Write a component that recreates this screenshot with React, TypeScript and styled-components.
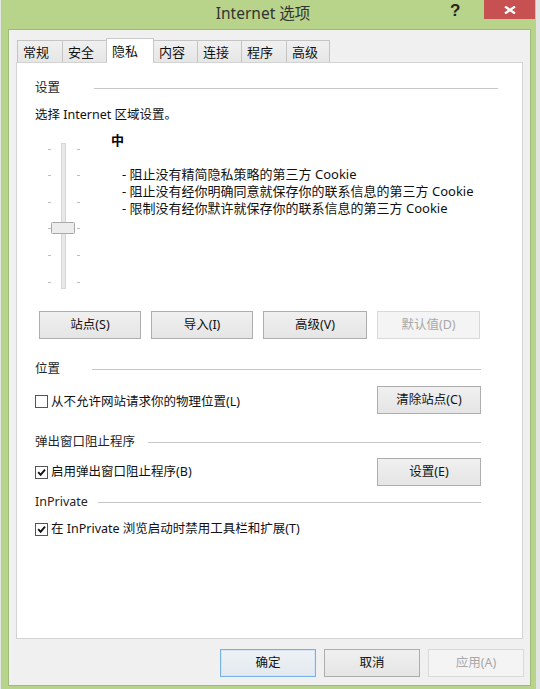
import React from "react";
import styled, { createGlobalStyle } from "styled-components";

const GlobalStyle = createGlobalStyle`
  html, body {
    margin: 0;
    padding: 0;
  }
  body {
    width: 540px;
    height: 689px;
    overflow: hidden;
    background: #e1e6e4;
    font-family: "Noto Sans", "Noto Sans CJK SC", sans-serif;
    font-size: 12.5px;
    color: #111111;
  }
`;

const Window = styled.div`
  box-sizing: border-box;
  width: 535px;
  height: 689px;
  margin-left: 1px;
  padding: 0 4px 3px 7px;
  background: #b8d38a;
  display: flex;
  flex-direction: column;
`;

const TitleBar = styled.div`
  height: 29px;
  display: flex;
  align-items: flex-start;
  margin-right: -4px;
`;

const Title = styled.div`
  flex: 1;
  padding: 3px 0 0 68px;
  text-align: center;
  font-size: 15.5px;
  line-height: 20px;
  color: #333333;
`;

const HelpButton = styled.div`
  width: 12px;
  margin: 1px 22px 0 0;
  font-family: "Liberation Sans", Arial, sans-serif;
  font-weight: 700;
  font-size: 17px;
  line-height: 20px;
  color: #262626;
`;

const CloseButton = styled.div`
  width: 51px;
  height: 19px;
  margin-right: 1px;
  background: #c75050;
  display: flex;
  align-items: center;
  justify-content: center;
`;

const Client = styled.div`
  box-sizing: border-box;
  width: 523px;
  height: 657px;
  border: 1px solid #9fb97c;
  background: #f0f0f0;
  padding-top: 8px;
  display: flex;
  flex-direction: column;
`;

const TabStrip = styled.div`
  display: flex;
  align-items: flex-end;
  height: 24px;
  margin-left: 8px;
`;

const Tab = styled.div<{ $w: number; $active?: boolean }>`
  box-sizing: border-box;
  width: ${(p) => p.$w}px;
  height: ${(p) => (p.$active ? 25 : 22)}px;
  margin-left: -1px;
  margin-bottom: ${(p) => (p.$active ? -1 : 0)}px;
  padding-left: 5px;
  border: 1px solid ${(p) => (p.$active ? "#c9c9c9" : "#c4c4c4")};
  border-bottom: none;
  background: ${(p) => (p.$active ? "#ffffff" : "linear-gradient(#f0f0f0, #e6e6e6)")};
  position: relative;
  z-index: ${(p) => (p.$active ? 1 : 0)};
  display: flex;
  align-items: center;
  font-size: 13px;
  line-height: 16px;
  &:first-child {
    margin-left: 0;
  }
`;

const Panel = styled.div`
  box-sizing: border-box;
  width: 507px;
  height: 577px;
  margin-left: 7px;
  border: 1px solid #d3d3d3;
  background: #ffffff;
  padding: 16px 24px 0 18px;
  display: flex;
  flex-direction: column;
`;

const GroupHead = styled.div<{ $top: number; $mr?: number }>`
  display: flex;
  align-items: center;
  height: 18px;
  margin-top: ${(p) => p.$top}px;
  margin-right: ${(p) => p.$mr ?? 17}px;
`;

const GroupLabel = styled.span<{ $w: number }>`
  width: ${(p) => p.$w}px;
  flex-shrink: 0;
  line-height: 18px;
  color: #262626;
`;

const Rule = styled.div`
  flex: 1;
  height: 1px;
  background: #c6c6c6;
`;

const Text = styled.div<{ $top?: number }>`
  margin-top: ${(p) => p.$top ?? 0}px;
  line-height: 18px;
`;

const SliderRow = styled.div`
  display: flex;
`;

const SliderArt = styled.svg`
  display: block;
  flex-shrink: 0;
  margin: 16px 0 0 11px;
`;

const LevelInfo = styled.div`
  margin-left: 29px;
  display: flex;
  flex-direction: column;
`;

const LevelName = styled.div`
  margin-top: 7px;
  font-weight: 700;
  font-size: 13px;
  line-height: 18px;
  color: #000;
`;

const Bullets = styled.div`
  margin: 17px 0 0 11px;
  display: flex;
  flex-direction: column;
`;

const Bullet = styled.div`
  height: 17px;
  font-size: 13px;
  line-height: 17px;
  white-space: nowrap;
`;

const ButtonRow = styled.div<{ $top: number; $gap: number; $left?: number }>`
  display: flex;
  gap: ${(p) => p.$gap}px;
  margin-top: ${(p) => p.$top}px;
  margin-left: ${(p) => p.$left ?? 0}px;
`;

const Button = styled.button<{ $w: number; $h?: number; $default?: boolean }>`
  box-sizing: border-box;
  width: ${(p) => p.$w}px;
  height: ${(p) => p.$h ?? 28}px;
  padding: 0;
  border: 1px solid ${(p) => (p.$default ? "#78b0e8" : "#adadad")};
  box-shadow: ${(p) => (p.$default ? "inset 0 0 0 1px #d4e6f7" : "none")};
  background: ${(p) =>
    p.$default ? "linear-gradient(#eef2f6, #e3e9ef)" : "linear-gradient(#f0f0f0, #e5e5e5)"};
  font-family: inherit;
  font-size: 12.5px;
  line-height: 16px;
  color: #111111;
  &:disabled {
    border-color: #d9d9d9;
    box-shadow: none;
    background: #f4f4f4;
    color: #a8a8a8;
  }
`;

const OptionRow = styled.div<{ $top: number; $h: number }>`
  display: flex;
  align-items: center;
  justify-content: space-between;
  height: ${(p) => p.$h}px;
  margin-top: ${(p) => p.$top}px;
  margin-right: 17px;
`;

const Check = styled.label<{ $nudge?: number }>`
  display: flex;
  align-items: center;
  gap: 3px;
  line-height: 18px;
  margin-top: ${(p) => p.$nudge ?? 0}px;
`;

const Box = styled.span`
  box-sizing: border-box;
  width: 13px;
  height: 13px;
  border: 1px solid #555555;
  background: #ffffff;
  display: flex;
  align-items: center;
  justify-content: center;
`;

const Footer = styled.div`
  display: flex;
  justify-content: flex-end;
  gap: 8px;
  margin: 10px 6px 0 0;
`;

const Tick = () => (
  <svg width="9" height="9" viewBox="0 0 9 9">
    <polyline points="1.2,4.2 3.6,6.8 8,1.6" fill="none" stroke="#111" strokeWidth="1.9" />
  </svg>
);

const CheckOption = ({ checked, label, nudge }: { checked?: boolean; label: string; nudge?: number }) => (
  <Check $nudge={nudge}>
    <Box>{checked && <Tick />}</Box>
    {label}
  </Check>
);

const tickYs = [9, 35, 62, 88, 115, 142];

const PrivacySlider = () => (
  <SliderArt width="36" height="150" viewBox="0 0 36 150">
    <rect x="15.5" y="3.5" width="4" height="145" fill="#e8e8e8" stroke="#d6d6d6" />
    {tickYs.map((y) => (
      <g key={y} stroke="#bdbdbd">
        <line x1="2" y1={y + 0.5} x2="5" y2={y + 0.5} />
        <line x1="31" y1={y + 0.5} x2="34" y2={y + 0.5} />
      </g>
    ))}
    <rect x="5.5" y="82.5" width="23" height="11" rx="1" fill="#ececec" stroke="#a9a9a9" />
  </SliderArt>
);

const tabs = [
  { name: "常规", w: 46 },
  { name: "安全", w: 45 },
  { name: "隐私", w: 48, active: true },
  { name: "内容", w: 45 },
  { name: "连接", w: 45 },
  { name: "程序", w: 46 },
  { name: "高级", w: 44 },
];

const cookieRules = [
  "- 阻止没有精简隐私策略的第三方 Cookie",
  "- 阻止没有经你明确同意就保存你的联系信息的第三方 Cookie",
  "- 限制没有经你默许就保存你的联系信息的第三方 Cookie",
];

export default function App() {
  return (
    <>
      <GlobalStyle />
      <Window>
        <TitleBar>
          <Title>Internet 选项</Title>
          <HelpButton>?</HelpButton>
          <CloseButton>
            <svg width="12" height="8" viewBox="0 0 12 8">
              <path d="M1 0.5 L11 7.5 M11 0.5 L1 7.5" stroke="#fff" strokeWidth="2.3" />
            </svg>
          </CloseButton>
        </TitleBar>
        <Client>
          <TabStrip>
            {tabs.map((t) => (
              <Tab key={t.name} $w={t.w} $active={t.active}>
                {t.name}
              </Tab>
            ))}
          </TabStrip>
          <Panel>
            <GroupHead $top={0} $mr={0}>
              <GroupLabel $w={59}>设置</GroupLabel>
              <Rule />
            </GroupHead>
            <Text $top={9}>选择 Internet 区域设置。</Text>
            <SliderRow>
              <PrivacySlider />
              <LevelInfo>
                <LevelName>中</LevelName>
                <Bullets>
                  {cookieRules.map((r) => (
                    <Bullet key={r}>{r}</Bullet>
                  ))}
                </Bullets>
              </LevelInfo>
            </SliderRow>
            <ButtonRow $top={21} $gap={10} $left={4}>
              <Button $w={102}>站点(S)</Button>
              <Button $w={102}>导入(I)</Button>
              <Button $w={104}>高级(V)</Button>
              <Button $w={103} disabled>
                默认值(D)
              </Button>
            </ButtonRow>

            <GroupHead $top={21}>
              <GroupLabel $w={57}>位置</GroupLabel>
              <Rule />
            </GroupHead>
            <OptionRow $top={8} $h={28}>
              <CheckOption label="从不允许网站请求你的物理位置(L)" nudge={3} />
              <Button $w={104} $h={28}>
                清除站点(C)
              </Button>
            </OptionRow>

            <GroupHead $top={19}>
              <GroupLabel $w={113}>弹出窗口阻止程序</GroupLabel>
              <Rule />
            </GroupHead>
            <OptionRow $top={7} $h={28}>
              <CheckOption checked label="启用弹出窗口阻止程序(B)" />
              <Button $w={104} $h={28}>
                设置(E)
              </Button>
            </OptionRow>

            <GroupHead $top={7}>
              <GroupLabel $w={63}>InPrivate</GroupLabel>
              <Rule />
            </GroupHead>
            <OptionRow $top={9} $h={18}>
              <CheckOption checked label="在 InPrivate 浏览启动时禁用工具栏和扩展(T)" />
            </OptionRow>
          </Panel>
          <Footer>
            <Button $w={96} $default>
              确定
            </Button>
            <Button $w={96}>取消</Button>
            <Button $w={96} disabled>
              应用(A)
            </Button>
          </Footer>
        </Client>
      </Window>
    </>
  );
}
